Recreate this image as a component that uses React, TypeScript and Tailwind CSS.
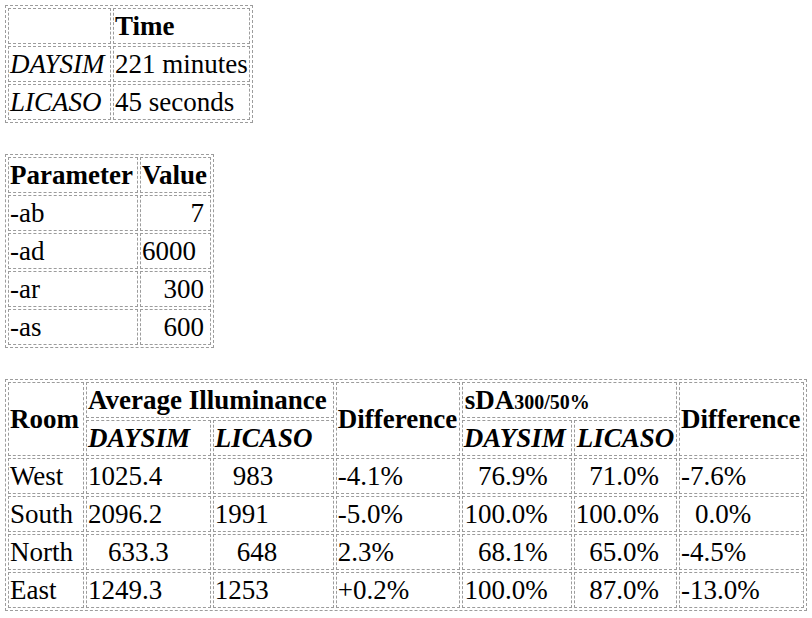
const td = 'border border-dashed border-[#9c9c9c] px-px py-px text-left align-middle font-normal';
const th = 'border border-dashed border-[#9c9c9c] px-px py-px text-left align-middle font-bold';
const table = 'border-separate border-spacing-[2px] border border-dashed border-[#9c9c9c]';

const rooms = [
  { room: 'West', avgD: '1025.4', avgDPad: 'pl-px', avgL: '983', avgLPad: 'pl-[19px]', diff: '-4.1%', sdaD: '76.9%', sdaL: '71.0%', diff2: '-7.6%', diff2Pad: 'pl-px' },
  { room: 'South', avgD: '2096.2', avgDPad: 'pl-px', avgL: '1991', avgLPad: 'pl-px', diff: '-5.0%', sdaD: '100.0%', sdaL: '100.0%', diff2: '0.0%', diff2Pad: 'pl-[15px]' },
  { room: 'North', avgD: '633.3', avgDPad: 'pl-[21px]', avgL: '648', avgLPad: 'pl-[23px]', diff: '2.3%', sdaD: '68.1%', sdaL: '65.0%', diff2: '-4.5%', diff2Pad: 'pl-px' },
  { room: 'East', avgD: '1249.3', avgDPad: 'pl-px', avgL: '1253', avgLPad: 'pl-px', diff: '+0.2%', sdaD: '100.0%', sdaL: '87.0%', diff2: '-13.0%', diff2Pad: 'pl-px' },
];

export default function App() {
  return (
    <div className="min-h-[618px] bg-white p-[5px] font-['Liberation_Serif','Times_New_Roman',serif] text-[27px] leading-[32px] text-black">
      <table className={table}>
        <tbody>
          <tr>
            <th className={`${th} w-[103px]`}></th>
            <th className={`${th} w-[137px]`}>Time</th>
          </tr>
          <tr>
            <td className={`${td} italic`}>DAYSIM</td>
            <td className={td}>221 minutes</td>
          </tr>
          <tr>
            <td className={`${td} italic`}>LICASO</td>
            <td className={td}>45 seconds</td>
          </tr>
        </tbody>
      </table>

      <table className={`${table} mt-[31px]`}>
        <tbody>
          <tr>
            <th className={`${th} w-[130px]`}>Parameter</th>
            <th className={`${th} w-[71px]`}>Value</th>
          </tr>
          <tr>
            <td className={td}>-ab</td>
            <td className={`${td} text-right pr-[6px]`}>7</td>
          </tr>
          <tr>
            <td className={td}>-ad</td>
            <td className={td}>6000</td>
          </tr>
          <tr>
            <td className={td}>-ar</td>
            <td className={`${td} text-right pr-[6px]`}>300</td>
          </tr>
          <tr>
            <td className={td}>-as</td>
            <td className={`${td} text-right pr-[6px]`}>600</td>
          </tr>
        </tbody>
      </table>

      <table className={`${table} mt-[31px]`}>
        <tbody>
          <tr>
            <th className={`${th} w-[76px]`} rowSpan={2}>Room</th>
            <th className={th} colSpan={2}>Average Illuminance</th>
            <th className={`${th} w-[124px]`} rowSpan={2}>Difference</th>
            <th className={`${th} pl-[2px]`} colSpan={2}>
              sDA<sub className="bottom-0 text-[20px]">300/50%</sub>
            </th>
            <th className={`${th} w-[125px]`} rowSpan={2}>Difference</th>
          </tr>
          <tr>
            <th className={`${th} italic w-[125px]`}>DAYSIM</th>
            <th className={`${th} italic w-[121px]`}>LICASO</th>
            <th className={`${th} italic w-[110px]`}>DAYSIM</th>
            <th className={`${th} italic w-[103px] pl-[2px]`}>LICASO</th>
          </tr>
          {rooms.map((r) => (
            <tr key={r.room}>
              <td className={td}>{r.room}</td>
              <td className={`${td} ${r.avgDPad}`}>{r.avgD}</td>
              <td className={`${td} ${r.avgLPad}`}>{r.avgL}</td>
              <td className={td}>{r.diff}</td>
              <td className={`${td} text-right pr-[23px]`}>{r.sdaD}</td>
              <td className={`${td} text-right pr-[17px]`}>{r.sdaL}</td>
              <td className={`${td} ${r.diff2Pad}`}>{r.diff2}</td>
            </tr>
          ))}
        </tbody>
      </table>
    </div>
  );
}
